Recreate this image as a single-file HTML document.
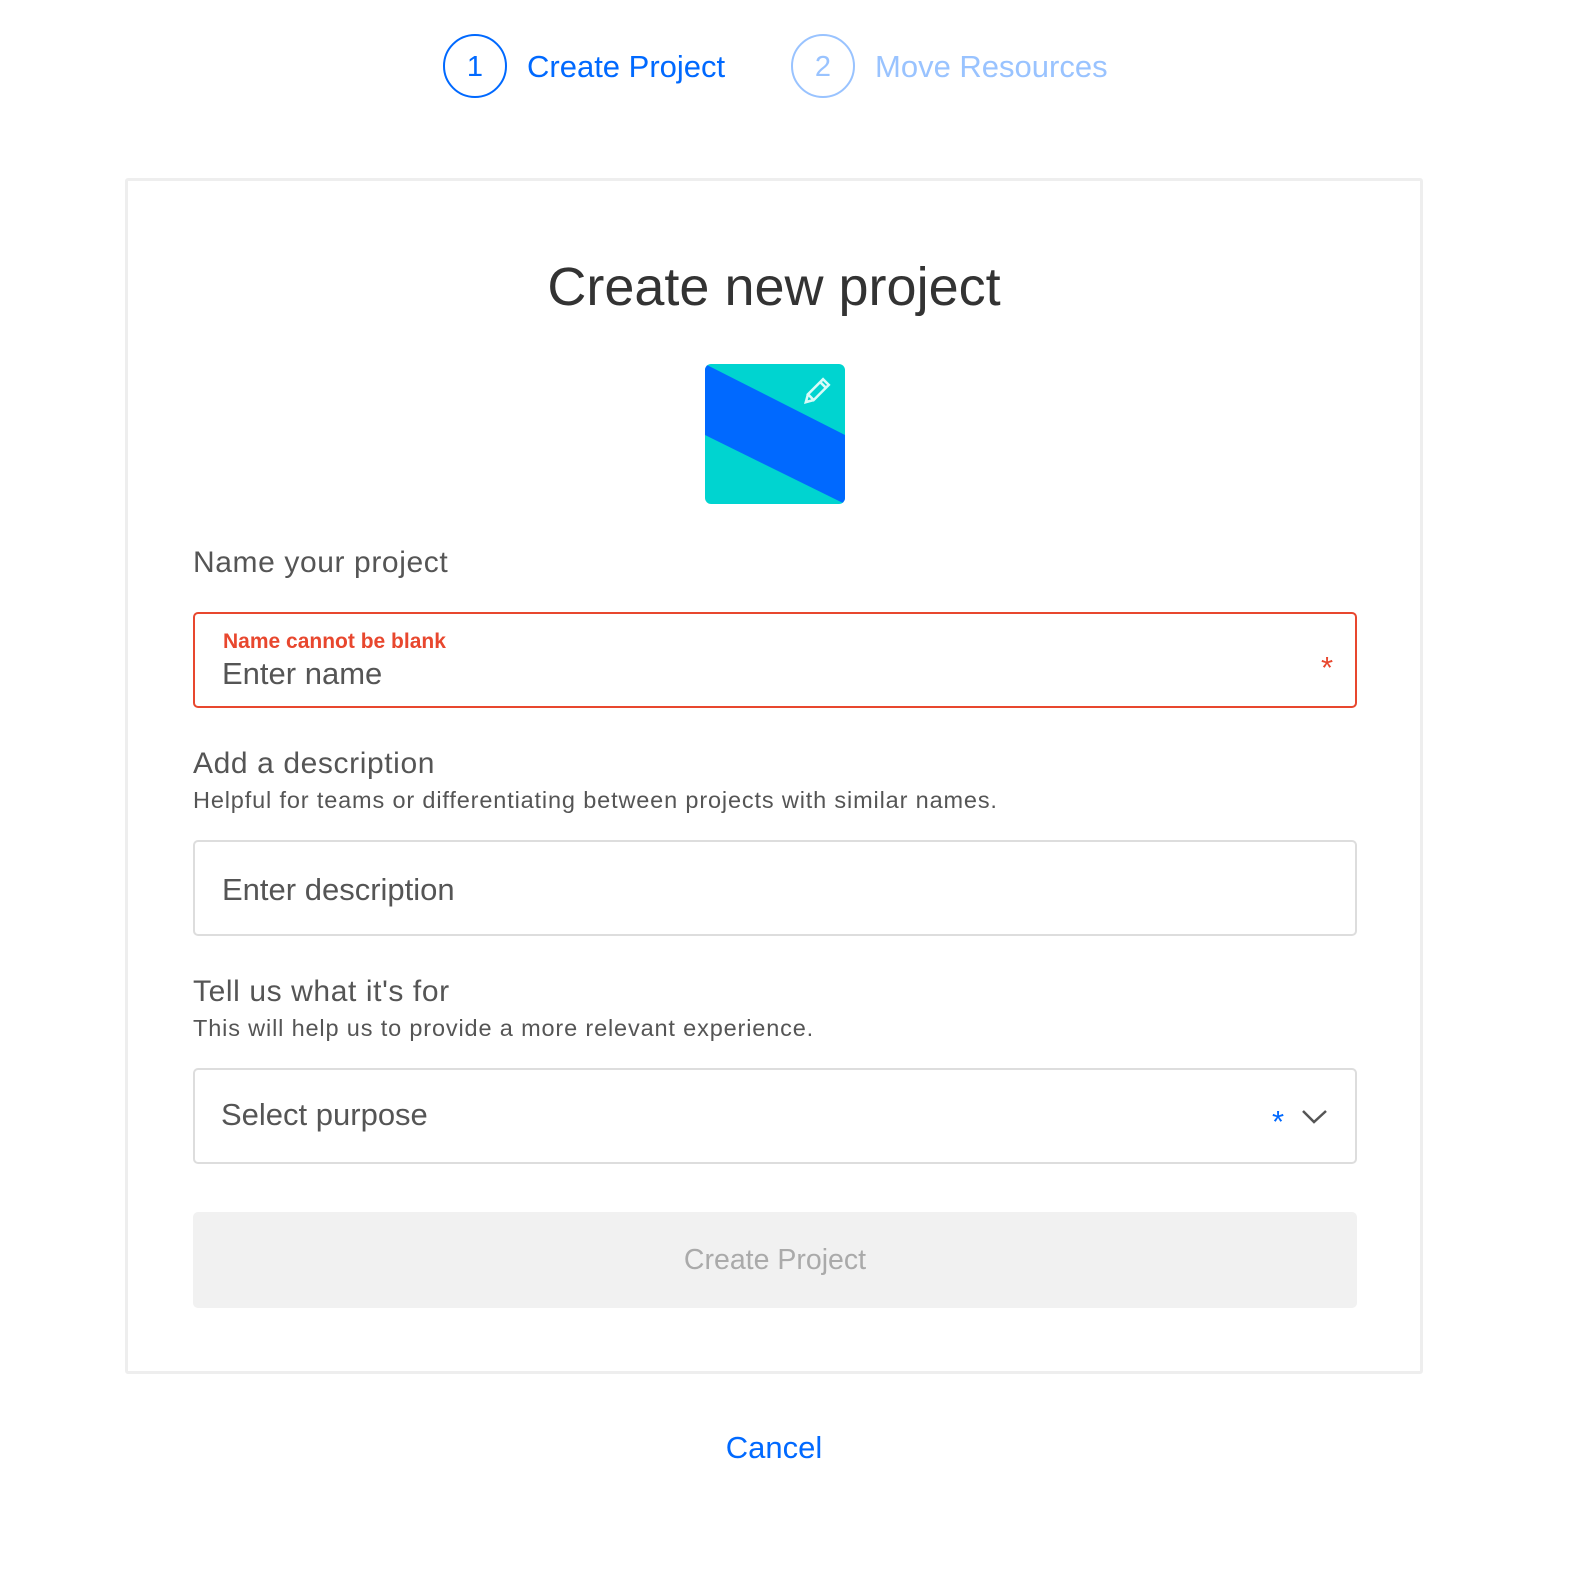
<!DOCTYPE html>
<html><head><meta charset="utf-8"><style>
*{margin:0;padding:0;box-sizing:border-box}
body{width:1586px;height:1572px;background:#fff;font-family:"Liberation Sans",sans-serif;position:relative;overflow:hidden}
.a{position:absolute;white-space:nowrap}
.circ{position:absolute;width:64px;height:64px;border-radius:50%;border:2px solid #0069ff;text-align:center;line-height:62px;font-size:29px}
.box{position:absolute;left:193px;width:1164px;height:96px;border:2px solid #ddd;border-radius:5px}
.lab{font-size:30px;letter-spacing:0.6px;color:#555}
.sub{font-size:23.5px;letter-spacing:0.85px;color:#555}
</style></head><body>
<div class="circ" style="left:443px;top:34px;color:#0069ff">1</div>
<div class="a" style="left:527px;top:49px;font-size:31px;color:#0069ff">Create Project</div>
<div class="circ" style="left:791px;top:34px;color:#99c3ff;border-color:#99c3ff">2</div>
<div class="a" style="left:875px;top:49px;font-size:31px;color:#99c3ff">Move Resources</div>

<div style="position:absolute;left:125px;top:178px;width:1298px;height:1196px;border:3px solid #eee;border-radius:3px"></div>
<div class="a" style="left:125px;width:1298px;text-align:center;top:256px;font-size:54px;color:#333">Create new project</div>

<svg class="a" style="left:705px;top:364px" width="140" height="140" viewBox="0 0 138 138">
<defs><clipPath id="c"><rect width="138" height="138" rx="6"/></clipPath></defs>
<g clip-path="url(#c)"><rect width="138" height="138" fill="#00d4d0"/><polygon points="0,0 138,70 138,138 0,70" fill="#0069ff"/></g>
<g transform="translate(110,27) rotate(45)" fill="none" stroke="#d8fbf8" stroke-width="2.5"><rect x="-4" y="-13" width="8" height="21"/><path d="M-4 8 L0 15 L4 8"/><line x1="-4" y1="-9" x2="4" y2="-9"/></g>
</svg>

<div class="a lab" style="left:193px;top:546px">Name your project</div>
<div class="box" style="top:612px;border-color:#e8472e"></div>
<div class="a" style="left:223px;top:630px;font-size:21px;font-weight:bold;color:#e8472e">Name cannot be blank</div>
<div class="a" style="left:222px;top:656px;font-size:31px;color:#555">Enter name</div>
<div class="a" style="left:1321px;top:650px;font-size:31px;color:#e8472e">*</div>

<div class="a lab" style="left:193px;top:747px">Add a description</div>
<div class="a sub" style="left:193px;top:787px">Helpful for teams or differentiating between projects with similar names.</div>
<div class="box" style="top:840px"></div>
<div class="a" style="left:222px;top:872px;font-size:31px;color:#555">Enter description</div>

<div class="a lab" style="left:193px;top:975px">Tell us what it's for</div>
<div class="a sub" style="left:193px;top:1015px">This will help us to provide a more relevant experience.</div>
<div class="box" style="top:1068px"></div>
<div class="a" style="left:221px;top:1097px;font-size:31px;color:#555">Select purpose</div>
<div class="a" style="left:1272px;top:1104px;font-size:31px;color:#0069ff">*</div>
<svg class="a" style="left:1301px;top:1108px" width="28" height="18"><path d="M2 3 L13 14 L25 3" fill="none" stroke="#555" stroke-width="2.5"/></svg>

<div style="position:absolute;left:193px;top:1212px;width:1164px;height:96px;background:#f1f1f1;border-radius:5px;text-align:center;line-height:96px;font-size:28.5px;color:#aaa">Create Project</div>

<div class="a" style="left:125px;width:1298px;text-align:center;top:1430px;font-size:31px;color:#0069ff">Cancel</div>
</body></html>
